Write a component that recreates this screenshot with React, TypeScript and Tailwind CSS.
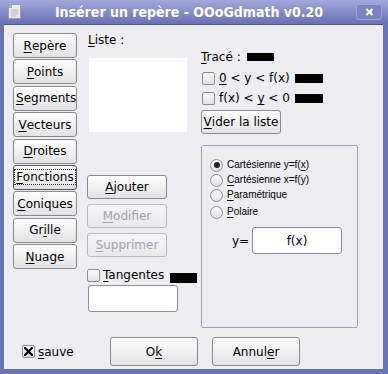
import type { ReactNode } from 'react';

const font = { fontFamily: '"DejaVu Sans", "Noto Sans", sans-serif' };

function Btn({
  children,
  className = '',
  disabled = false,
  focused = false,
  left = false,
}: {
  children: ReactNode;
  className?: string;
  disabled?: boolean;
  focused?: boolean;
  left?: boolean;
}) {
  return (
    <div
      className={`flex items-center overflow-hidden whitespace-nowrap rounded-[3px] border text-[12px] leading-[14px] ${
        left ? 'justify-start pl-[2px]' : 'justify-center'
      } ${
        disabled
          ? 'border-[#b9b9bd] bg-linear-to-b from-[#f6f6f8] to-[#e9e9ec] text-[#a3a3a8]'
          : focused
            ? 'border-[#55555a] bg-linear-to-b from-white to-[#e2e2e4] text-black'
            : 'border-[#8a8a8e] bg-linear-to-b from-white to-[#e2e2e4] text-black'
      } ${className}`}
    >
      {focused ? (
        <span className="border border-dotted border-[#333] px-[1px] leading-[14px]">{children}</span>
      ) : (
        children
      )}
    </div>
  );
}

function U({ children }: { children: ReactNode }) {
  return <span className="underline decoration-1 underline-offset-[2px]">{children}</span>;
}

function Check({ checked = false }: { checked?: boolean }) {
  return (
    <span className="flex h-[13px] w-[13px] shrink-0 items-center justify-center rounded-[2px] border border-[#8e8e92] bg-linear-to-b from-[#fafafa] to-[#e3e3e6]">
      {checked && (
        <svg width="9" height="9" viewBox="0 0 9 9">
          <path d="M1 1 L8 8 M8 1 L1 8" stroke="#000" strokeWidth="2.2" strokeLinecap="square" />
        </svg>
      )}
    </span>
  );
}

function Radio({ on = false }: { on?: boolean }) {
  return (
    <span className="flex h-[13px] w-[13px] shrink-0 items-center justify-center rounded-full border border-[#8e8e92] bg-linear-to-b from-[#fafafa] to-[#e3e3e6]">
      {on && <span className="h-[6px] w-[6px] rounded-full bg-[#222]" />}
    </span>
  );
}

export default function App() {
  const menu = [
    { t: <><U>R</U>epère</> },
    { t: <><U>P</U>oints</> },
    { t: <><U>S</U>egments</>, left: true },
    { t: <><U>V</U>ecteurs</> },
    { t: <><U>D</U>roites</> },
    { t: <><U>F</U>onctions</>, focused: true },
    { t: <><U>C</U>oniques</> },
    { t: <>Gr<U>i</U>lle</> },
    { t: <><U>N</U>uage</> },
  ];

  const radios = [
    { t: <>Cartésienne y=f(<U>x</U>)</>, on: true, mt: 'mt-0' },
    { t: <><U>C</U>artésienne x=f(y)</>, mt: 'mt-[1px]' },
    { t: <><U>P</U>aramétrique</>, mt: 'mt-[1px]' },
    { t: <><U>P</U>olaire</>, mt: 'mt-[3px]' },
  ];

  return (
    <div className="flex h-[374px] w-[388px] flex-col bg-[#6b73b5]" style={font}>
      {/* barre de titre */}
      <div className="flex h-[23px] items-center bg-linear-to-b from-[#a3a9da] to-[#6b73b5]">
        <div className="flex w-[26px] justify-center pl-[2px]">
          <svg width="13" height="15" viewBox="0 0 13 15">
            <path d="M3.5 0.5 H12.5 V14.5 H0.5 V3.5 Z" fill="#e8e9ee" stroke="#9a9cab" />
            <path d="M0.5 3.5 H3.5 V0.5" fill="#c9cbd6" stroke="#9a9cab" />
            <path d="M3 6 H10 M3 8 H10 M3 10 H10 M3 12 H8" stroke="#b7b9c6" />
          </svg>
        </div>
        <div
          className="flex-1 pr-[4px] text-center text-[14px] font-bold leading-[16px] text-white"
          style={{ fontFamily: '"DejaVu Sans Condensed", "DejaVu Sans", sans-serif' }}
        >
          Insérer un repère - OOoGdmath v0.20
        </div>
        <div className="mr-[6px] flex h-[16px] w-[26px] items-center justify-center rounded-[3px] border border-[#9ea4d6] bg-[#7a82c0]">
          <svg width="9" height="8" viewBox="0 0 9 8">
            <path d="M1.5 1 L7.5 7 M7.5 1 L1.5 7" stroke="#fff" strokeWidth="2.2" />
          </svg>
        </div>
      </div>

      {/* contenu */}
      <div className="ml-[4px] mr-[5px] mt-[1px] flex flex-1 flex-col border-t border-[#4d5592] bg-[#ededf2] text-black">
        <div className="flex pl-[9px] pt-[8px]">
          {/* colonne des onglets */}
          <div className="flex w-[64px] flex-col gap-[1.4px]">
            {menu.map((m, i) => (
              <Btn key={i} className="h-[25px]" left={m.left} focused={m.focused}>
                {m.t}
              </Btn>
            ))}
          </div>

          {/* colonne liste */}
          <div className="ml-[10px] flex w-[112px] flex-col">
            <div className="pl-[1px] text-[12px] leading-[14px]">
              <U>L</U>iste :
            </div>
            <div className="ml-[2px] mt-[11px] h-[74px] w-[98px] bg-white" />
            <Btn className="mt-[43px] h-[24px] w-[80px]">
              <U>A</U>jouter
            </Btn>
            <Btn className="mt-[5px] h-[24px] w-[80px]" disabled>
              <U>M</U>odifier
            </Btn>
            <Btn className="mt-[5px] h-[24px] w-[80px]" disabled>
              <U>S</U>upprimer
            </Btn>
            <div className="mt-[10px] flex h-[16px] items-center text-[12px] leading-[14px]">
              <Check />
              <span className="ml-[3px]">
                <U>T</U>angentes
              </span>
              <span className="ml-[6px] h-[10px] w-[27px] self-end bg-black" />
            </div>
            <div className="ml-[1px] mt-[2px] h-[27px] w-[90px] rounded-[3px] border border-[#8e8e92] bg-white" />
          </div>

          {/* colonne tracé */}
          <div className="ml-[2px] flex w-[157px] flex-col text-[12px] leading-[14px]">
            <div className="mt-[17px] flex h-[14px] items-center">
              <span>
                <U>T</U>racé :
              </span>
              <span className="ml-[6px] h-[8px] w-[27px] bg-black" />
            </div>
            <div className="mt-[7px] flex h-[14px] items-center pl-[1px]">
              <Check />
              <span className="ml-[4px]">
                <U>0</U> &lt; y &lt; f(x)
              </span>
              <span className="ml-[5px] h-[9px] w-[28px] bg-black" />
            </div>
            <div className="mt-[6px] flex h-[14px] items-center pl-[1px]">
              <Check />
              <span className="ml-[4px]">
                f(x) &lt; <U>y</U> &lt; 0
              </span>
              <span className="ml-[5px] h-[9px] w-[28px] bg-black" />
            </div>
            <Btn className="mt-[5px] h-[24px] w-[80px]">
              <U>V</U>ider la liste
            </Btn>
            <div className="mt-[11px] flex h-[183px] w-[157px] flex-col rounded-[2px] border border-[#a3a3aa] pl-[8px] pt-[12px]">
              {radios.map((r, i) => (
                <div key={i} className={`flex h-[14px] items-center ${r.mt}`}>
                  <Radio on={r.on} />
                  <span
                    className="ml-[4px] text-[10px] leading-[12px]"
                    style={{ fontFamily: '"Liberation Sans", Arial, sans-serif' }}
                  >
                    {r.t}
                  </span>
                </div>
              ))}
              <div className="mt-[8px] flex items-center pl-[22px]">
                <span className="w-[20px]">y=</span>
                <div className="flex h-[27px] w-[90px] items-center justify-center rounded-[3px] border border-[#8e8e92] bg-white">
                  f(x)
                </div>
              </div>
            </div>
          </div>
        </div>

        {/* boutons du bas */}
        <div className="mt-[9px] flex items-center pl-[18px] text-[12px] leading-[14px]">
          <div className="flex w-[88px] items-center">
            <Check checked />
            <span className="ml-[3px]">
              <U>s</U>auve
            </span>
          </div>
          <Btn className="h-[29px] w-[88px]">
            O<U>k</U>
          </Btn>
          <Btn className="ml-[14px] h-[29px] w-[88px]">
            Annul<U>e</U>r
          </Btn>
        </div>
      </div>
      <div className="h-[5px]" />
    </div>
  );
}
